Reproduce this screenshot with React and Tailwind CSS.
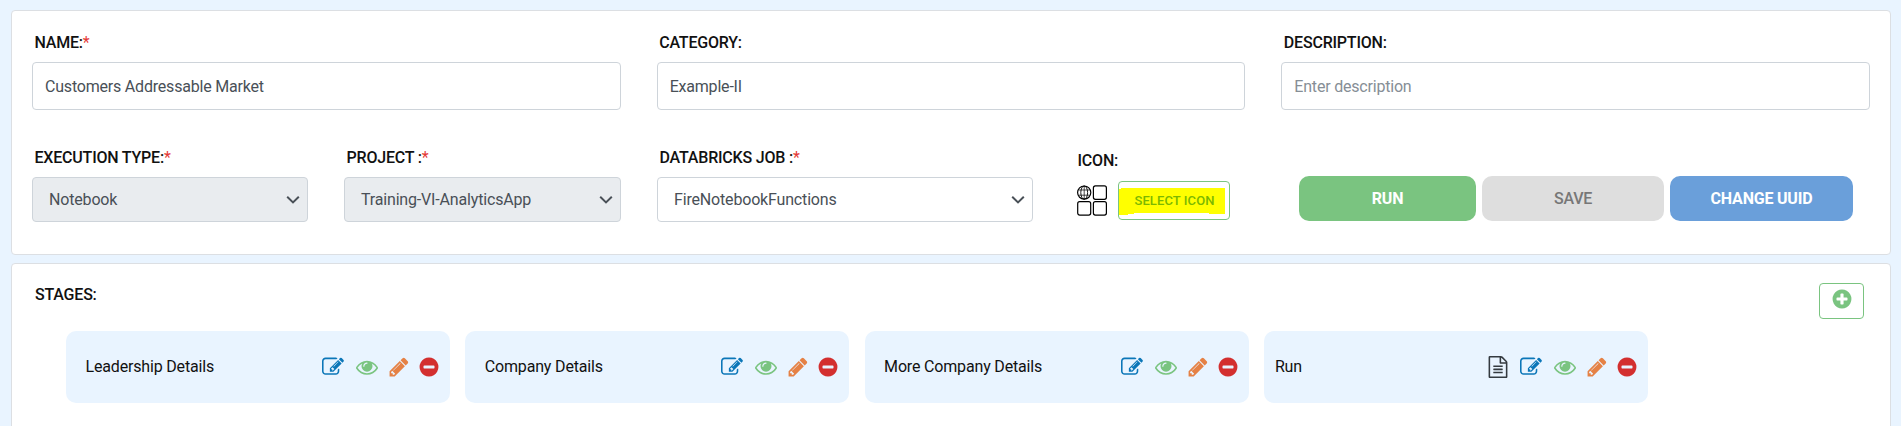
import React from "react";

const PATHS = {
  edit: "M888 1184l116-116-152-152-116 116v56h96v96h56zm440-720q-16-16-33 1l-350 350q-17 17-1 33t33-1l350-350q17-17 1-33zm80 594v190q0 119-84.5 203.5t-203.5 84.5h-832q-119 0-203.5-84.5t-84.5-203.5v-832q0-119 84.5-203.5t203.5-84.5h832q63 0 117 25 15 7 18 23 3 17-9 29l-49 49q-14 14-32 8-23-6-45-6h-832q-66 0-113 47t-47 113v832q0 66 47 113t113 47h832q66 0 113-47t47-113v-126q0-13 9-22l64-64q15-15 35-7t20 29zm-96-738l288 288-672 672h-288v-288zm444 132l-92 92-288-288 92-92q28-28 68-28t68 28l152 152q28 28 28 68t-28 68z",
  eye: "M1664 960q-152-236-381-353 61 104 61 225 0 185-131.5 316.5t-316.5 131.5-316.5-131.5-131.5-316.5q0-121 61-225-229 117-381 353 133 205 333.5 326.5t434.5 121.5 434.5-121.5 333.5-326.5zm-720-384q0-20-14-34t-34-14q-125 0-214.5 89.5t-89.5 214.5q0 20 14 34t34 14 34-14 14-34q0-86 61-147t147-61q20 0 34-14t14-34zm848 384q0 34-20 69-140 230-376.5 368.5t-499.5 138.5-499.5-139-376.5-368q-20-35-20-69t20-69q140-229 376.5-368t499.5-139 499.5 139 376.5 368q20 35 20 69z",
  pencil: "M491 1536l91-91-235-235-91 91v107h128v128h107zm523-928q0-22-22-22-10 0-17 7l-542 542q-7 7-7 17 0 22 22 22 10 0 17-7l542-542q7-7 7-17zm-54-192l416 416-832 832h-416v-416zm683 96q0 53-37 90l-166 166-416-416 166-165q36-38 90-38 53 0 91 38l235 234q37 39 37 91z",
  minus: "M1344 960v-128q0-26-19-45t-45-19h-768q-26 0-45 19t-19 45v128q0 26 19 45t45 19h768q26 0 45-19t19-45zm320-64q0 209-103 385.5t-279.5 279.5-385.5 103-385.5-103-279.5-279.5-103-385.5 103-385.5 279.5-279.5 385.5-103 385.5 103 279.5 279.5 103 385.5z",
  plus: "M1344 960v-128q0-26-19-45t-45-19h-256v-256q0-26-19-45t-45-19h-128q-26 0-45 19t-19 45v256h-256q-26 0-45 19t-19 45v128q0 26 19 45t45 19h256v256q0 26 19 45t45 19h128q26 0 45-19t19-45v-256h256q26 0 45-19t19-45zm320-64q0 209-103 385.5t-279.5 279.5-385.5 103-385.5-103-279.5-279.5-103-385.5 103-385.5 279.5-279.5 385.5-103 385.5 103 279.5 279.5 103 385.5z",
  file: "M1596 380q28 28 48 76t20 88v1152q0 40-28 68t-68 28h-1344q-40 0-68-28t-28-68v-1600q0-40 28-68t68-28h896q40 0 88 20t76 48zm-444-244v376h376q-10-29-22-41l-313-313q-12-12-41-22zm384 1528v-1024h-416q-40 0-68-28t-28-68v-416h-768v1536h1280zm-1024-864q0-14 9-23t23-9h704q14 0 23 9t9 23v64q0 14-9 23t-23 9h-704q-14 0-23-9t-9-23v-64zm736 224q14 0 23 9t9 23v64q0 14-9 23t-23 9h-704q-14 0-23-9t-9-23v-64q0-14 9-23t23-9h704zm0 256q14 0 23 9t9 23v64q0 14-9 23t-23 9h-704q-14 0-23-9t-9-23v-64q0-14 9-23t23-9h704z",
};

function Icon({ name, className }) {
  return (
    <svg viewBox="0 0 1792 1792" fill="currentColor" className={`size-[22px] shrink-0 ${className}`}>
      <path d={PATHS[name]} />
    </svg>
  );
}

function Label({ children, required }) {
  return (
    <div className="pl-[2.5px] text-base leading-6 font-medium tracking-[-0.2px] whitespace-nowrap text-[#111]">
      {children}
      {required && <span className="font-normal text-[#e53935]">*</span>}
    </div>
  );
}

function TextField({ label, required, value, placeholder }) {
  return (
    <div className="flex flex-col gap-[7px]">
      <Label required={required}>{label}</Label>
      <div className={`flex h-12 items-center rounded border border-[#ced4da] bg-white px-3 pt-px text-base tracking-[-0.2px] ${placeholder ? "text-[#868e96]" : "text-[#495057]"}`}>
        {value || placeholder}
      </div>
    </div>
  );
}

function SelectField({ label, value, disabled, className }) {
  return (
    <div className={`flex flex-col gap-[7px] ${className}`}>
      <Label required>{label}</Label>
      <div className={`flex h-[45px] items-center justify-between rounded border border-[#ced4da] pr-[7px] pl-4 text-base tracking-[-0.17px] text-[#495057] ${disabled ? "bg-[#e9ecef]" : "bg-white"}`}>
        <span>{value}</span>
        <svg viewBox="0 0 14 10" className="h-[10px] w-[14px] fill-none stroke-[#495057] stroke-2">
          <path d="M1.2 1.8 7 7.4l5.8-5.6" />
        </svg>
      </div>
    </div>
  );
}

function GridIcon() {
  return (
    <svg viewBox="0 0 30 31" className="h-[31px] w-[30px] fill-none stroke-black" strokeWidth="1.2">
      <rect x="16.4" y="0.9" width="13" height="13.4" rx="2" />
      <rect x="0.7" y="16.7" width="13" height="13.4" rx="2" />
      <rect x="16.4" y="16.7" width="13" height="13.4" rx="2" />
      <circle cx="7.2" cy="7.6" r="6.6" />
      <ellipse cx="7.2" cy="7.6" rx="3.4" ry="6.6" strokeWidth="0.9" />
      <path d="M7.2 1v13.2M1.6 5h11.2M1.6 10.2h11.2" strokeWidth="0.7" />
    </svg>
  );
}

function Stage({ name, file }) {
  return (
    <div className={`flex h-[72px] w-[384px] items-center rounded-[10px] bg-[#e9f4ff] pr-[10px] ${file ? "pl-[11px]" : "pl-[19.5px]"}`}>
      <span className="grow text-base tracking-[-0.17px] text-[#111]">{name}</span>
      <div className="flex items-center">
        {file && <Icon name="file" className="mr-[11px] text-[#343a40]" />}
        <Icon name="edit" className="mr-3 text-[#0b76b8]" />
        <Icon name="eye" className="mr-[10px] text-[#7ac480]" />
        <Icon name="pencil" className="mr-2 text-[#e58145]" />
        <Icon name="minus" className="text-[#d32f2f]" />
      </div>
    </div>
  );
}

export default function App() {
  return (
    <div className="flex h-[426px] flex-col gap-2 overflow-hidden bg-[#e9f4ff] pt-[10px] pr-[10px] pl-[11px] font-['Roboto',sans-serif]">
      <section className="flex h-[245px] shrink-0 flex-col rounded border border-[#dcdfe3] bg-white px-5 pt-5">
        <div className="grid grid-cols-3 gap-9">
          <TextField label="NAME:" required value="Customers Addressable Market" />
          <TextField label="CATEGORY:" value="Example-II" />
          <TextField label="DESCRIPTION:" placeholder="Enter description" />
        </div>

        <div className="mt-9 flex">
          <SelectField label="EXECUTION TYPE:" value="Notebook" disabled className="mr-9 w-[276px]" />
          <SelectField label="PROJECT :" value="Training-VI-AnalyticsApp" disabled className="mr-9 w-[277px]" />
          <SelectField label="DATABRICKS JOB :" value="FireNotebookFunctions" className="mr-[42px] w-[376px]" />

          <div className="mt-[3px] flex flex-col gap-2">
            <Label>ICON:</Label>
            <div className="flex items-center gap-[11px] pl-[2px]">
              <GridIcon />
              <button className="relative h-[39px] w-[112px] rounded border border-[#7ac480] pl-px text-[13px] font-medium tracking-[0.1px] whitespace-nowrap text-[#7bb800]">
                <svg viewBox="0 0 110 37" className="absolute inset-0 h-[37px] w-[110px] fill-[#ffff00]">
                  <path d="M0 7h2V6h104v26H90v-1H15v1H9v1H0z" />
                </svg>
                <span className="relative">SELECT ICON</span>
              </button>
            </div>
          </div>

          <div className="mt-[30px] ml-[69px] flex gap-[6px] text-base tracking-[-0.2px]">
            <button className="h-[45px] w-[177px] rounded-[10px] bg-[#7ac480] font-bold text-white">RUN</button>
            <button className="h-[45px] w-[182px] rounded-[10px] bg-[#dedede] font-medium text-[#777]">SAVE</button>
            <button className="h-[45px] w-[183px] rounded-[10px] bg-[#6a9fda] font-bold text-white">CHANGE UUID</button>
          </div>
        </div>
      </section>

      <section className="flex h-[200px] shrink-0 flex-col rounded border border-[#dcdfe3] bg-white">
        <div className="flex items-start justify-between pt-[19px] pr-[26px] pl-[20.5px]">
          <Label>STAGES:</Label>
          <button className="flex h-9 w-[45px] items-start justify-center rounded border border-[#7ac480] pt-1">
            <Icon name="plus" className="text-[#7ac480]" />
          </button>
        </div>
        <div className="mt-3 ml-[54px] flex gap-[15.3px]">
          <Stage name="Leadership Details" />
          <Stage name="Company Details" />
          <Stage name="More Company Details" />
          <Stage name="Run" file />
        </div>
      </section>
    </div>
  );
}
